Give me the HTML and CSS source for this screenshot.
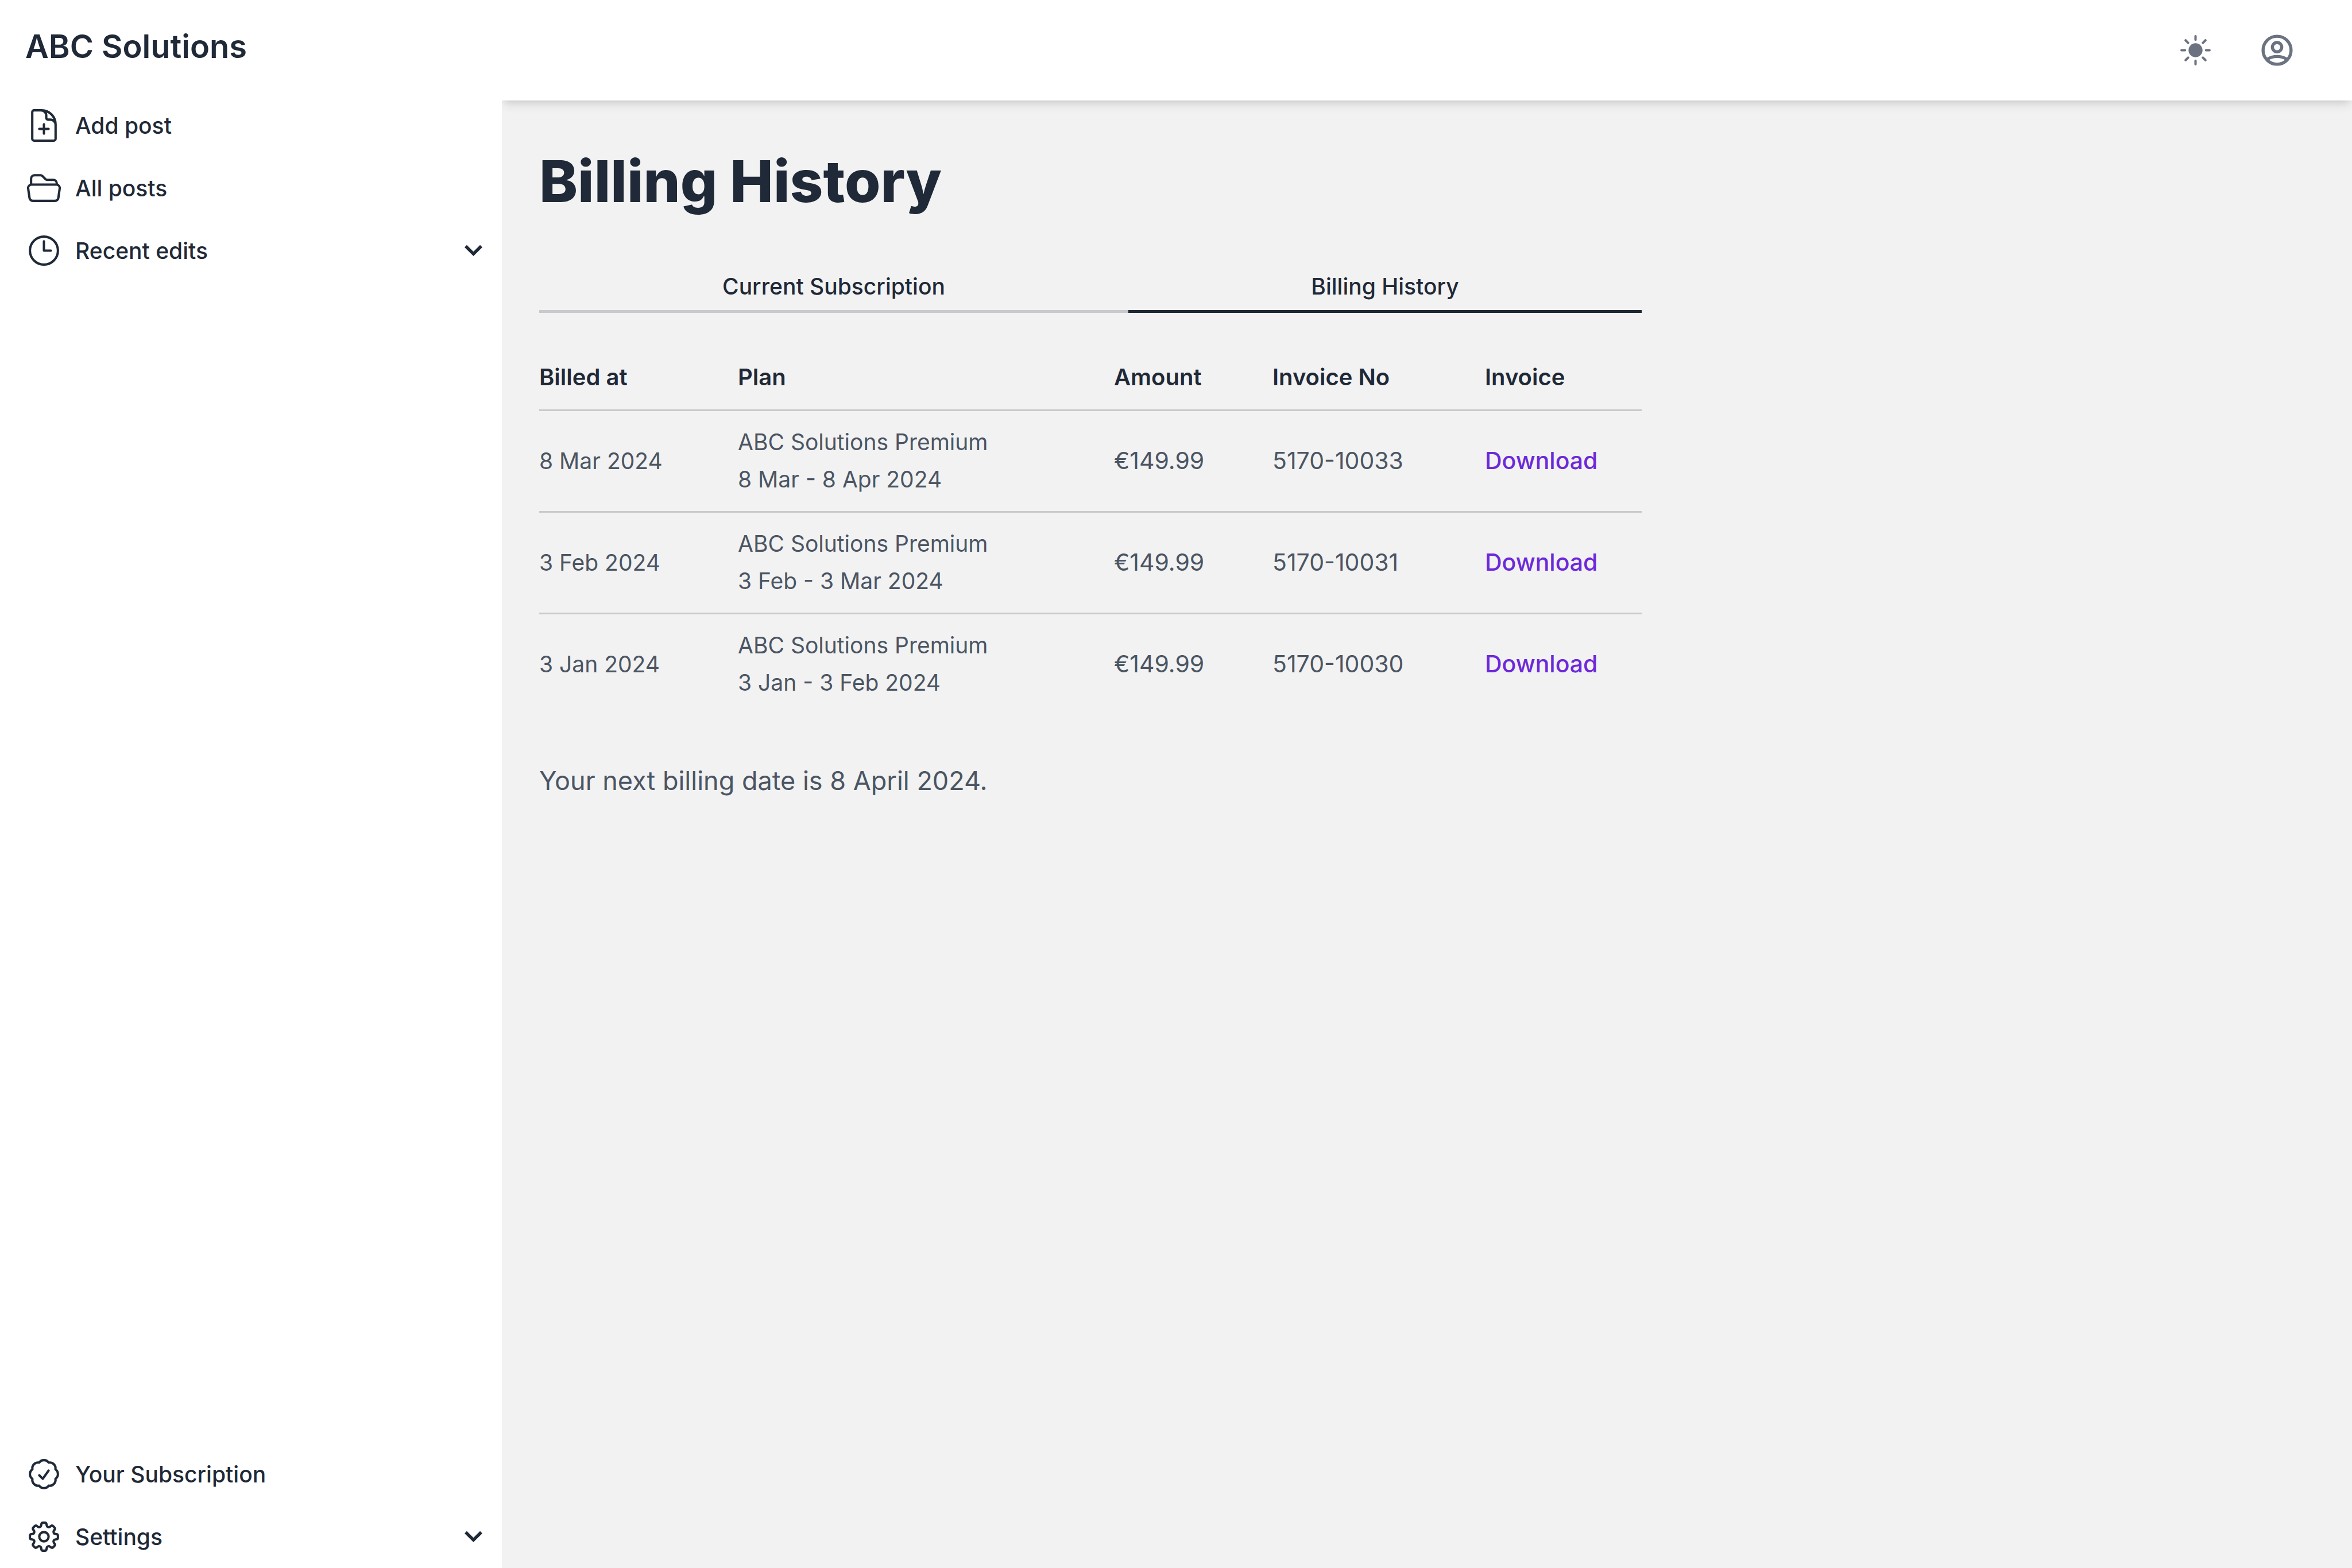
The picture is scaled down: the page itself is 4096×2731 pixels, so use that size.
FILE: index.html
```html
<!DOCTYPE html>
<html lang="en">
<head>
<meta charset="utf-8">
<meta name="viewport" content="width=device-width, initial-scale=1">
<title>Billing History - ABC Solutions</title>
<link rel="stylesheet" href="styles.css">
</head>
<body class="app">
  <aside class="sidebar">
    <div class="brand">ABC Solutions</div>
    <nav class="nav" aria-label="Posts">
      <a class="nav-item" href="#add">
        <svg class="icon line" viewBox="0 0 24 24" aria-hidden="true"><path d="M19.5 14.25v-2.625a3.375 3.375 0 0 0-3.375-3.375h-1.5A1.125 1.125 0 0 1 13.5 7.125v-1.5a3.375 3.375 0 0 0-3.375-3.375H8.25m3.75 9v6m3-3H9m1.5-12H5.625c-.621 0-1.125.504-1.125 1.125v17.25c0 .621.504 1.125 1.125 1.125h12.75c.621 0 1.125-.504 1.125-1.125V11.25a9 9 0 0 0-9-9Z"/></svg>
        Add post
      </a>
      <a class="nav-item" href="#all">
        <svg class="icon line" viewBox="0 0 24 24" aria-hidden="true"><path d="M3.75 9.776c.112-.017.227-.026.344-.026h15.812c.117 0 .232.009.344.026m-16.5 0a2.25 2.25 0 0 0-1.883 2.542l.857 6a2.25 2.25 0 0 0 2.227 1.932H19.05a2.25 2.25 0 0 0 2.227-1.932l.857-6a2.25 2.25 0 0 0-1.883-2.542m-16.5 0V6A2.25 2.25 0 0 1 6 3.75h3.879a1.5 1.5 0 0 1 1.06.44l2.122 2.12a1.5 1.5 0 0 0 1.06.44H18A2.25 2.25 0 0 1 20.25 9v.776"/></svg>
        All posts
      </a>
      <button class="nav-item" type="button" aria-expanded="false">
        <svg class="icon line" viewBox="0 0 24 24" aria-hidden="true"><path d="M12 6v6h4.5m4.5 0a9 9 0 1 1-18 0 9 9 0 0 1 18 0Z"/></svg>
        Recent edits
        <svg class="chevron" viewBox="0 0 24 24" aria-hidden="true"><path d="M6.1 8.6 12 14.5l5.900-5.900"/></svg>
      </button>
    </nav>
    <nav class="nav nav-bottom" aria-label="Account">
      <a class="nav-item" href="#subscription">
        <svg class="icon line" viewBox="0 0 24 24" aria-hidden="true"><path d="M9 12.75 11.25 15 15 9.75M21 12c0 1.268-.63 2.39-1.593 3.068a3.745 3.745 0 0 1-1.043 3.296 3.745 3.745 0 0 1-3.296 1.043A3.745 3.745 0 0 1 12 21c-1.268 0-2.39-.63-3.068-1.593a3.746 3.746 0 0 1-3.296-1.043 3.745 3.745 0 0 1-1.043-3.296A3.745 3.745 0 0 1 3 12c0-1.268.63-2.39 1.593-3.068a3.745 3.745 0 0 1 1.043-3.296 3.746 3.746 0 0 1 3.296-1.043A3.746 3.746 0 0 1 12 3c1.268 0 2.39.63 3.068 1.593a3.746 3.746 0 0 1 3.296 1.043 3.746 3.746 0 0 1 1.043 3.296A3.745 3.745 0 0 1 21 12Z"/></svg>
        Your Subscription
      </a>
      <button class="nav-item" type="button" aria-expanded="false">
        <svg class="icon line" viewBox="0 0 24 24" aria-hidden="true"><path d="M10.343 3.94c.09-.542.56-.94 1.11-.94h1.093c.55 0 1.02.398 1.11.94l.149.894c.07.424.384.764.78.93.398.164.855.142 1.205-.108l.737-.527a1.125 1.125 0 0 1 1.45.12l.773.774c.39.389.44 1.002.12 1.45l-.527.737c-.25.35-.272.806-.107 1.204.165.397.505.71.93.78l.893.15c.543.09.94.559.94 1.109v1.094c0 .55-.397 1.02-.94 1.11l-.894.149c-.424.07-.764.383-.929.78-.165.398-.143.854.107 1.204l.527.738c.32.447.269 1.06-.12 1.45l-.774.773a1.125 1.125 0 0 1-1.449.12l-.738-.527c-.35-.25-.806-.272-1.203-.107-.398.165-.71.505-.781.929l-.149.894c-.09.542-.56.94-1.11.94h-1.094c-.55 0-1.019-.398-1.11-.94l-.148-.894c-.071-.424-.384-.764-.781-.93-.398-.164-.854-.142-1.204.108l-.738.527c-.447.32-1.06.269-1.45-.12l-.773-.774a1.125 1.125 0 0 1-.12-1.45l.527-.737c.25-.35.272-.806.108-1.204-.165-.397-.506-.71-.93-.78l-.894-.15c-.542-.09-.94-.56-.94-1.109v-1.094c0-.55.398-1.02.94-1.11l.894-.149c.424-.07.765-.383.93-.78.165-.398.143-.854-.108-1.204l-.526-.738a1.125 1.125 0 0 1 .12-1.45l.773-.773a1.125 1.125 0 0 1 1.45-.12l.737.527c.35.25.807.272 1.204.107.397-.165.71-.505.78-.929l.15-.894ZM15 12a3 3 0 1 1-6 0 3 3 0 0 1 6 0Z"/></svg>
        Settings
        <svg class="chevron" viewBox="0 0 24 24" aria-hidden="true"><path d="M6.1 8.6 12 14.5l5.900-5.900"/></svg>
      </button>
    </nav>
  </aside>

  <div class="page">
    <header class="topbar">
      <button class="icon-button" type="button" aria-label="Toggle theme">
        <svg class="icon" viewBox="0 0 24 24" aria-hidden="true"><circle cx="12" cy="12" r="4.5" fill="currentColor"/><path class="rays" d="M12 3v2.25M12 18.75V21M3 12h2.25M18.75 12H21M5.64 5.64l1.59 1.59M16.77 16.77l1.59 1.59M5.64 18.36l1.59-1.59M16.77 7.23l1.59-1.59"/></svg>
      </button>
      <button class="icon-button" type="button" aria-label="Account">
        <svg class="icon account" viewBox="0 0 24 24" aria-hidden="true"><circle cx="12" cy="12" r="9"/><circle cx="12" cy="10" r="3"/><path d="M6 17.6C7.7 16.5 9.8 16 12 16s4.300 .5 6 1.600"/></svg>
      </button>
    </header>

    <main class="content">
      <h1 class="title">Billing History</h1>
      <nav class="tabs" aria-label="Billing">
        <a class="tab" href="#current">Current Subscription</a>
        <a class="tab tab-active" href="#history" aria-current="page">Billing History</a>
      </nav>
      <table class="invoices">
        <colgroup><col class="col-date"><col class="col-plan"><col class="col-amount"><col class="col-number"><col></colgroup>
        <thead>
          <tr><th scope="col">Billed at</th><th scope="col">Plan</th><th scope="col">Amount</th><th scope="col">Invoice No</th><th scope="col">Invoice</th></tr>
        </thead>
        <tbody>
          <tr><td>8 Mar 2024</td><td>ABC Solutions Premium<br>8 Mar - 8 Apr 2024</td><td class="figure">€149.99</td><td class="figure">5170-10033</td><td class="figure"><a class="download" href="#10033">Download</a></td></tr>
          <tr><td>3 Feb 2024</td><td>ABC Solutions Premium<br>3 Feb - 3 Mar 2024</td><td class="figure">€149.99</td><td class="figure">5170-10031</td><td class="figure"><a class="download" href="#10031">Download</a></td></tr>
          <tr><td>3 Jan 2024</td><td>ABC Solutions Premium<br>3 Jan - 3 Feb 2024</td><td class="figure">€149.99</td><td class="figure">5170-10030</td><td class="figure"><a class="download" href="#10030">Download</a></td></tr>
        </tbody>
      </table>
      <p class="next-date">Your next billing date is 8 April 2024.</p>
    </main>
  </div>
</body>
</html>
```
FILE: styles.css
```css
* { box-sizing: border-box; }

.app {
  display: flex;
  min-height: 100vh;
  margin: 0;
  background: #f2f2f2;
  color: #1f2937;
  font-family: Inter, "Liberation Sans", sans-serif;
  font-size: 39px;
  line-height: 65px;
}

a { color: inherit; text-decoration: none; }
button { padding: 0; border: 0; background: none; color: inherit; font: inherit; cursor: pointer; }

/* Sidebar, stacked above the top bar's shadow */
.sidebar {
  display: flex;
  flex: 0 0 874px;
  flex-direction: column;
  z-index: 1;
  background: #fff;
}
.brand {
  padding: 44px 44px 46px;
  font-size: 56px;
  font-weight: 600;
  line-height: 74px;
}
.nav { display: flex; flex-direction: column; }
.nav-bottom { margin-top: auto; }
.nav-item {
  display: flex;
  align-items: center;
  gap: 22px;
  width: 100%;
  padding: 22px 22px 22px 44px;
  font-weight: 500;
  text-align: left;
}
.icon { display: block; width: 65px; height: 65px; }
.line {
  fill: none;
  stroke: currentColor;
  stroke-width: 1.5;
  stroke-linecap: round;
  stroke-linejoin: round;
}
.chevron {
  width: 55px;
  height: 55px;
  margin-left: auto;
  fill: none;
  stroke: currentColor;
  stroke-width: 2.4;
}

/* Top bar */
.page { display: flex; flex: 1; flex-direction: column; min-width: 0; }
.topbar {
  display: flex;
  align-items: center;
  justify-content: flex-end;
  gap: 77px;
  padding: 55px 98px;
  background: #fff;
  box-shadow: 0 11px 16px -3px rgba(0, 0, 0, .1), 0 5px 11px -5px rgba(0, 0, 0, .1);
}
.icon-button { color: #6b7280; }
.rays { stroke: currentColor; stroke-width: 1.5; stroke-linecap: round; }
.account { fill: none; stroke: currentColor; stroke-width: 2; }

/* Content */
.content { max-width: 1985px; padding: 85px 0 85px 65px; }
.title { margin: 0 0 96px; font-size: 101px; font-weight: 800; line-height: 110px; }
.tabs { display: flex; margin-bottom: 58px; font-weight: 500; text-align: center; }
.tab { flex: 894; padding-bottom: 9px; border-bottom: 5px solid #1f2937; }
.tab:not(.tab-active) { flex: 1026; border-color: #c9cace; }

.invoices { width: 100%; border-spacing: 0; table-layout: fixed; }
.col-date { width: 346px; }
.col-plan { width: 655px; }
.col-amount { width: 276px; }
.col-number { width: 370px; }
.invoices th, .invoices td {
  padding: 21px 0 22px;
  border-bottom: 3px solid #c9cace;
  text-align: left;
}
.invoices th { padding-bottom: 24px; font-size: 40px; font-weight: 600; }
.invoices td { padding-bottom: 23px; color: #4b5563; }
.invoices .figure { font-size: 41px; }
.invoices tbody tr:last-child td { border-bottom: 0; }
.invoices .download { color: #6d28d9; font-weight: 500; }
.next-date { margin: 79px 0 0; color: #4b5563; font-size: 45px; line-height: 74px; }
```
